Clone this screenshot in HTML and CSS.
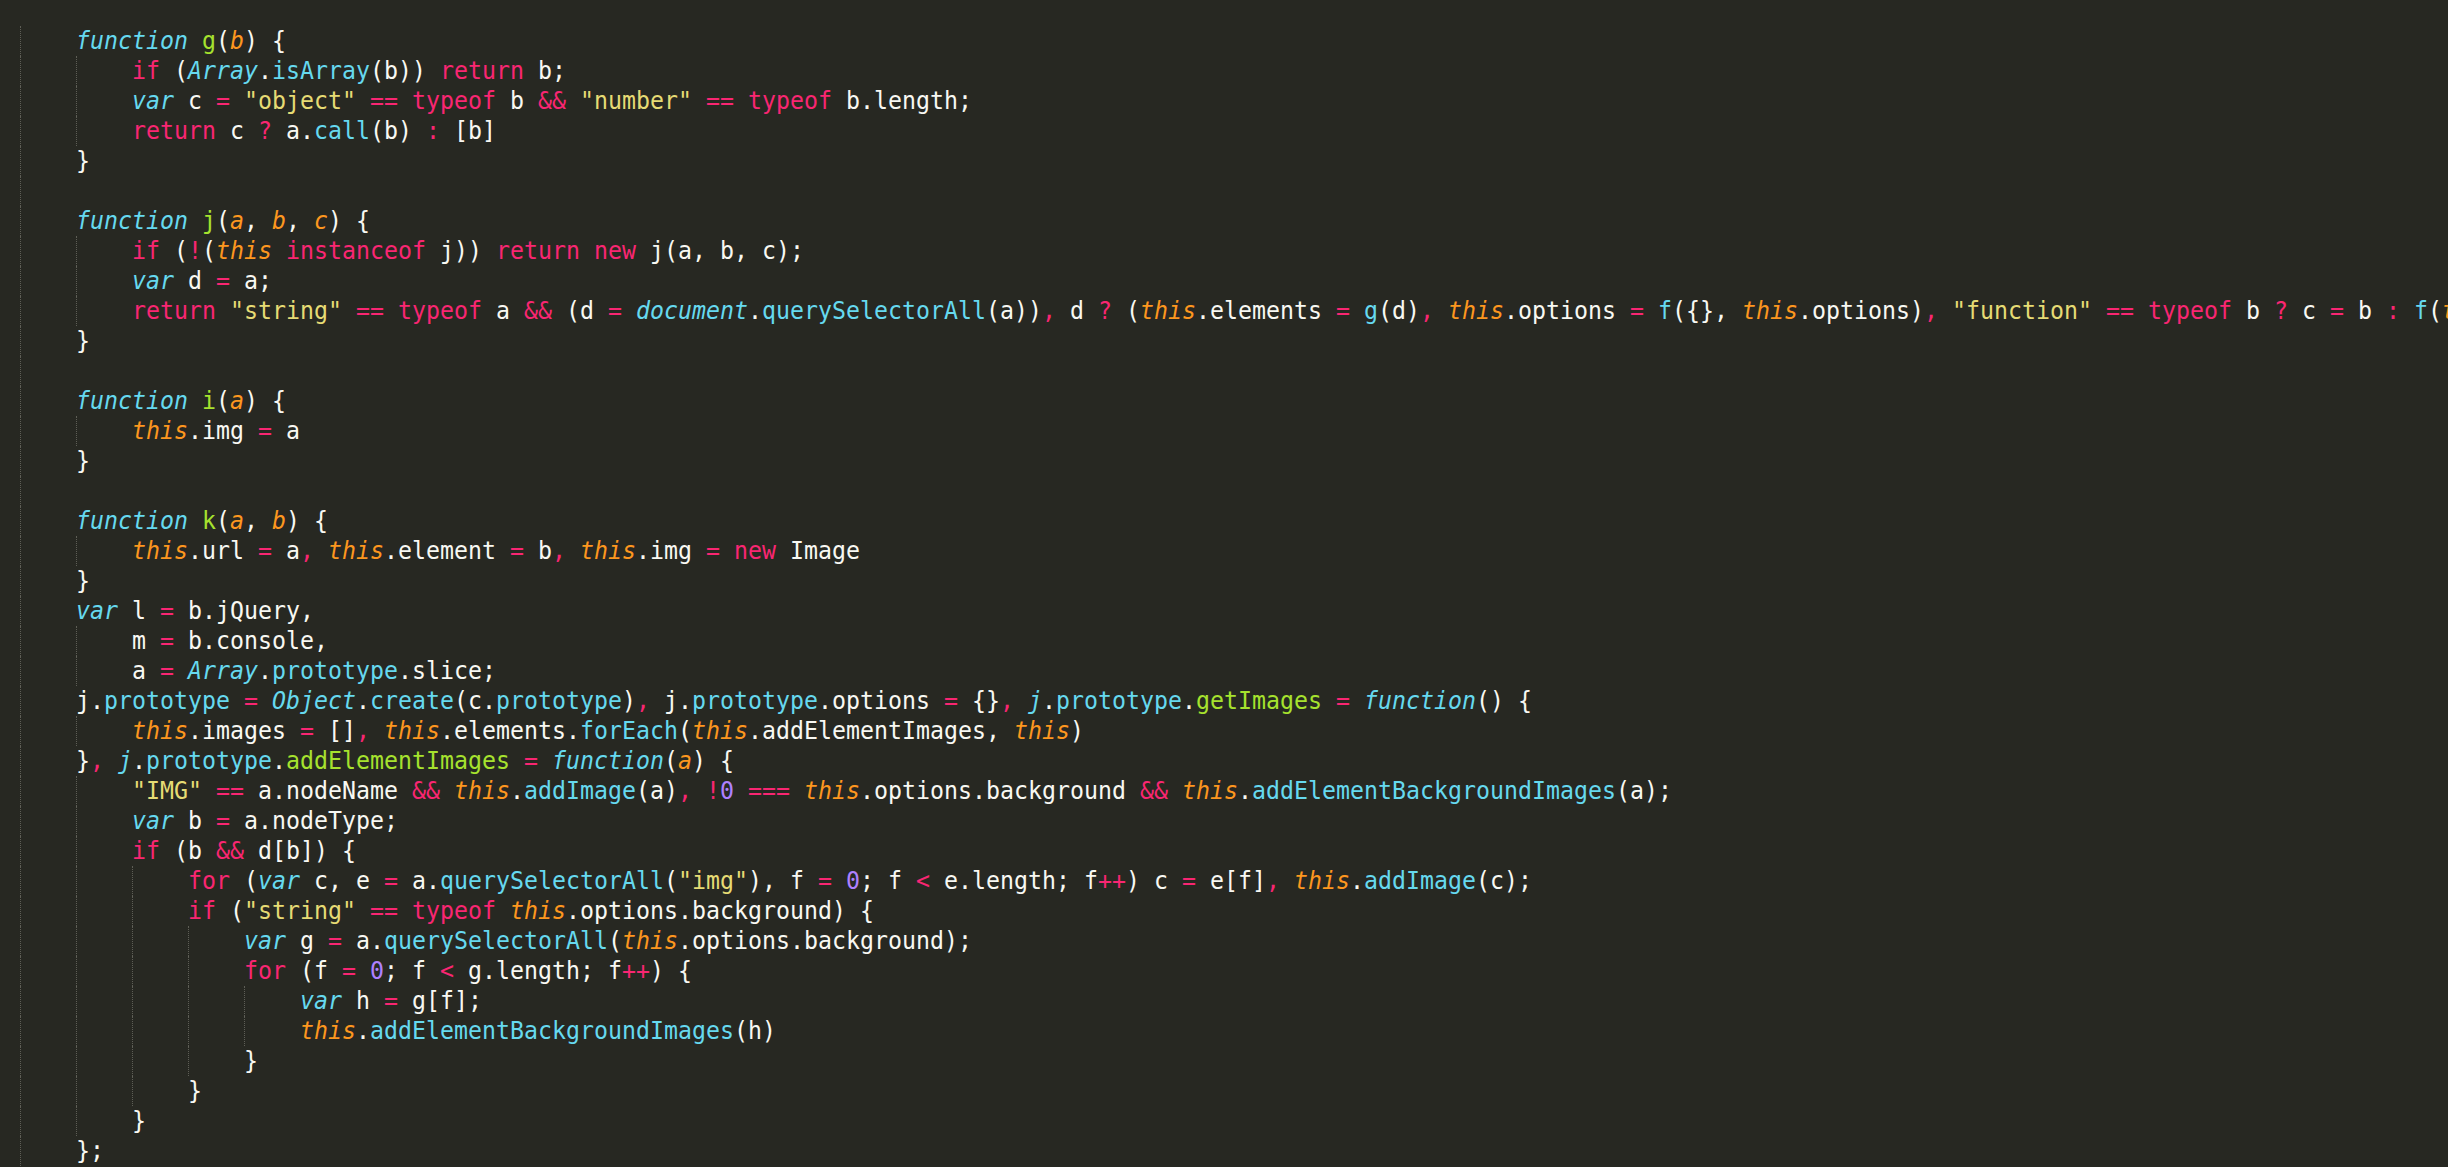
FILE: index.html
```html
<!DOCTYPE html>
<html lang="en">
<head>
    <meta charset="UTF-8">
    <title>imagesloaded.js</title>
    <link rel="stylesheet" href="styles.css">
</head>
<body>

<div class="editor">
    <div class="ln"><span class="g"></span><code><span class="s">function</span> <span class="n">g</span>(<span class="p">b</span>) {</code></div>
    <div class="ln"><span class="g"></span><span class="g"></span><code><span class="k">if</span> (<span class="s">Array</span>.<span class="c">isArray</span>(b)) <span class="k">return</span> b;</code></div>
    <div class="ln"><span class="g"></span><span class="g"></span><code><span class="s">var</span> c <span class="k">=</span> <span class="q">"object"</span> <span class="k">==</span> <span class="k">typeof</span> b <span class="k">&amp;&amp;</span> <span class="q">"number"</span> <span class="k">==</span> <span class="k">typeof</span> b.length;</code></div>
    <div class="ln"><span class="g"></span><span class="g"></span><code><span class="k">return</span> c <span class="k">?</span> a.<span class="c">call</span>(b) <span class="k">:</span> [b]</code></div>
    <div class="ln"><span class="g"></span><code>}</code></div>
    <div class="ln"><span class="g"></span></div>
    <div class="ln"><span class="g"></span><code><span class="s">function</span> <span class="n">j</span>(<span class="p">a</span>, <span class="p">b</span>, <span class="p">c</span>) {</code></div>
    <div class="ln"><span class="g"></span><span class="g"></span><code><span class="k">if</span> (<span class="k">!</span>(<span class="p">this</span> <span class="k">instanceof</span> j)) <span class="k">return</span> <span class="k">new</span> j(a, b, c);</code></div>
    <div class="ln"><span class="g"></span><span class="g"></span><code><span class="s">var</span> d <span class="k">=</span> a;</code></div>
    <div class="ln"><span class="g"></span><span class="g"></span><code><span class="k">return</span> <span class="q">"string"</span> <span class="k">==</span> <span class="k">typeof</span> a <span class="k">&amp;&amp;</span> (d <span class="k">=</span> <span class="s">document</span>.<span class="c">querySelectorAll</span>(a))<span class="k">,</span> d <span class="k">?</span> (<span class="p">this</span>.elements <span class="k">=</span> <span class="c">g</span>(d)<span class="k">,</span> <span class="p">this</span>.options <span class="k">=</span> <span class="c">f</span>({}, <span class="p">this</span>.options)<span class="k">,</span> <span class="q">"function"</span> <span class="k">==</span> <span class="k">typeof</span> b <span class="k">?</span> c <span class="k">=</span> b <span class="k">:</span> <span class="c">f</span>(<span class="p">this</span>.options, b)</code></div>
    <div class="ln"><span class="g"></span><code>}</code></div>
    <div class="ln"><span class="g"></span></div>
    <div class="ln"><span class="g"></span><code><span class="s">function</span> <span class="n">i</span>(<span class="p">a</span>) {</code></div>
    <div class="ln"><span class="g"></span><span class="g"></span><code><span class="p">this</span>.img <span class="k">=</span> a</code></div>
    <div class="ln"><span class="g"></span><code>}</code></div>
    <div class="ln"><span class="g"></span></div>
    <div class="ln"><span class="g"></span><code><span class="s">function</span> <span class="n">k</span>(<span class="p">a</span>, <span class="p">b</span>) {</code></div>
    <div class="ln"><span class="g"></span><span class="g"></span><code><span class="p">this</span>.url <span class="k">=</span> a<span class="k">,</span> <span class="p">this</span>.element <span class="k">=</span> b<span class="k">,</span> <span class="p">this</span>.img <span class="k">=</span> <span class="k">new</span> Image</code></div>
    <div class="ln"><span class="g"></span><code>}</code></div>
    <div class="ln"><span class="g"></span><code><span class="s">var</span> l <span class="k">=</span> b.jQuery,</code></div>
    <div class="ln"><span class="g"></span><span class="g"></span><code>m <span class="k">=</span> b.console,</code></div>
    <div class="ln"><span class="g"></span><span class="g"></span><code>a <span class="k">=</span> <span class="s">Array</span>.<span class="c">prototype</span>.slice;</code></div>
    <div class="ln"><span class="g"></span><code>j.<span class="c">prototype</span> <span class="k">=</span> <span class="s">Object</span>.<span class="c">create</span>(c.<span class="c">prototype</span>)<span class="k">,</span> j.<span class="c">prototype</span>.options <span class="k">=</span> {}<span class="k">,</span> <span class="s">j</span>.<span class="c">prototype</span>.<span class="n">getImages</span> <span class="k">=</span> <span class="s">function</span>() {</code></div>
    <div class="ln"><span class="g"></span><span class="g"></span><code><span class="p">this</span>.images <span class="k">=</span> []<span class="k">,</span> <span class="p">this</span>.elements.<span class="c">forEach</span>(<span class="p">this</span>.addElementImages, <span class="p">this</span>)</code></div>
    <div class="ln"><span class="g"></span><code>}<span class="k">,</span> <span class="s">j</span>.<span class="c">prototype</span>.<span class="n">addElementImages</span> <span class="k">=</span> <span class="s">function</span>(<span class="p">a</span>) {</code></div>
    <div class="ln"><span class="g"></span><span class="g"></span><code><span class="q">"IMG"</span> <span class="k">==</span> a.nodeName <span class="k">&amp;&amp;</span> <span class="p">this</span>.<span class="c">addImage</span>(a)<span class="k">,</span> <span class="k">!</span><span class="m">0</span> <span class="k">===</span> <span class="p">this</span>.options.background <span class="k">&amp;&amp;</span> <span class="p">this</span>.<span class="c">addElementBackgroundImages</span>(a);</code></div>
    <div class="ln"><span class="g"></span><span class="g"></span><code><span class="s">var</span> b <span class="k">=</span> a.nodeType;</code></div>
    <div class="ln"><span class="g"></span><span class="g"></span><code><span class="k">if</span> (b <span class="k">&amp;&amp;</span> d[b]) {</code></div>
    <div class="ln"><span class="g"></span><span class="g"></span><span class="g"></span><code><span class="k">for</span> (<span class="s">var</span> c, e <span class="k">=</span> a.<span class="c">querySelectorAll</span>(<span class="q">"img"</span>), f <span class="k">=</span> <span class="m">0</span>; f <span class="k">&lt;</span> e.length; f<span class="k">++</span>) c <span class="k">=</span> e[f]<span class="k">,</span> <span class="p">this</span>.<span class="c">addImage</span>(c);</code></div>
    <div class="ln"><span class="g"></span><span class="g"></span><span class="g"></span><code><span class="k">if</span> (<span class="q">"string"</span> <span class="k">==</span> <span class="k">typeof</span> <span class="p">this</span>.options.background) {</code></div>
    <div class="ln"><span class="g"></span><span class="g"></span><span class="g"></span><span class="g"></span><code><span class="s">var</span> g <span class="k">=</span> a.<span class="c">querySelectorAll</span>(<span class="p">this</span>.options.background);</code></div>
    <div class="ln"><span class="g"></span><span class="g"></span><span class="g"></span><span class="g"></span><code><span class="k">for</span> (f <span class="k">=</span> <span class="m">0</span>; f <span class="k">&lt;</span> g.length; f<span class="k">++</span>) {</code></div>
    <div class="ln"><span class="g"></span><span class="g"></span><span class="g"></span><span class="g"></span><span class="g"></span><code><span class="s">var</span> h <span class="k">=</span> g[f];</code></div>
    <div class="ln"><span class="g"></span><span class="g"></span><span class="g"></span><span class="g"></span><span class="g"></span><code><span class="p">this</span>.<span class="c">addElementBackgroundImages</span>(h)</code></div>
    <div class="ln"><span class="g"></span><span class="g"></span><span class="g"></span><span class="g"></span><code>}</code></div>
    <div class="ln"><span class="g"></span><span class="g"></span><span class="g"></span><code>}</code></div>
    <div class="ln"><span class="g"></span><span class="g"></span><code>}</code></div>
    <div class="ln"><span class="g"></span><code>};</code></div>
</div>

</body>
</html>
```

FILE: styles.css
```css
html, body {
    margin: 0;
    height: 100%;
    background-color: #272822;
    overflow: hidden;
}
.editor {
    padding: 26px 0 0 20px;
    font-family: "DejaVu Sans Mono", "Liberation Mono", monospace;
    font-size: 25px;
    color: #F8F8F2;
    overflow: hidden;
}
.ln {
    display: flex;
    height: 30px;
    line-height: 30px;
    white-space: pre;
}
/* indent guides, one per 4 columns (4 x 14px) */
.g {
    flex: none;
    width: 56px;
    box-sizing: border-box;
    border-left: 1px dotted #5e5e56;
}
/* editor font is a bit narrower than DejaVu: 14px per column */
code {
    font-family: inherit;
    flex: none;
    transform: scaleX(0.93);
    transform-origin: 0 50%;
}
.k { color: #F92672; }                          /* keywords, operators */
.s { color: #66D9EF; font-style: italic; }      /* storage, builtins */
.c { color: #66D9EF; }                          /* support functions */
.n { color: #A6E22E; }                          /* function names */
.p { color: #FD971F; font-style: italic; }      /* params, this */
.q { color: #E6DB74; }                          /* strings */
.m { color: #AE81FF; }                          /* numbers */
```
